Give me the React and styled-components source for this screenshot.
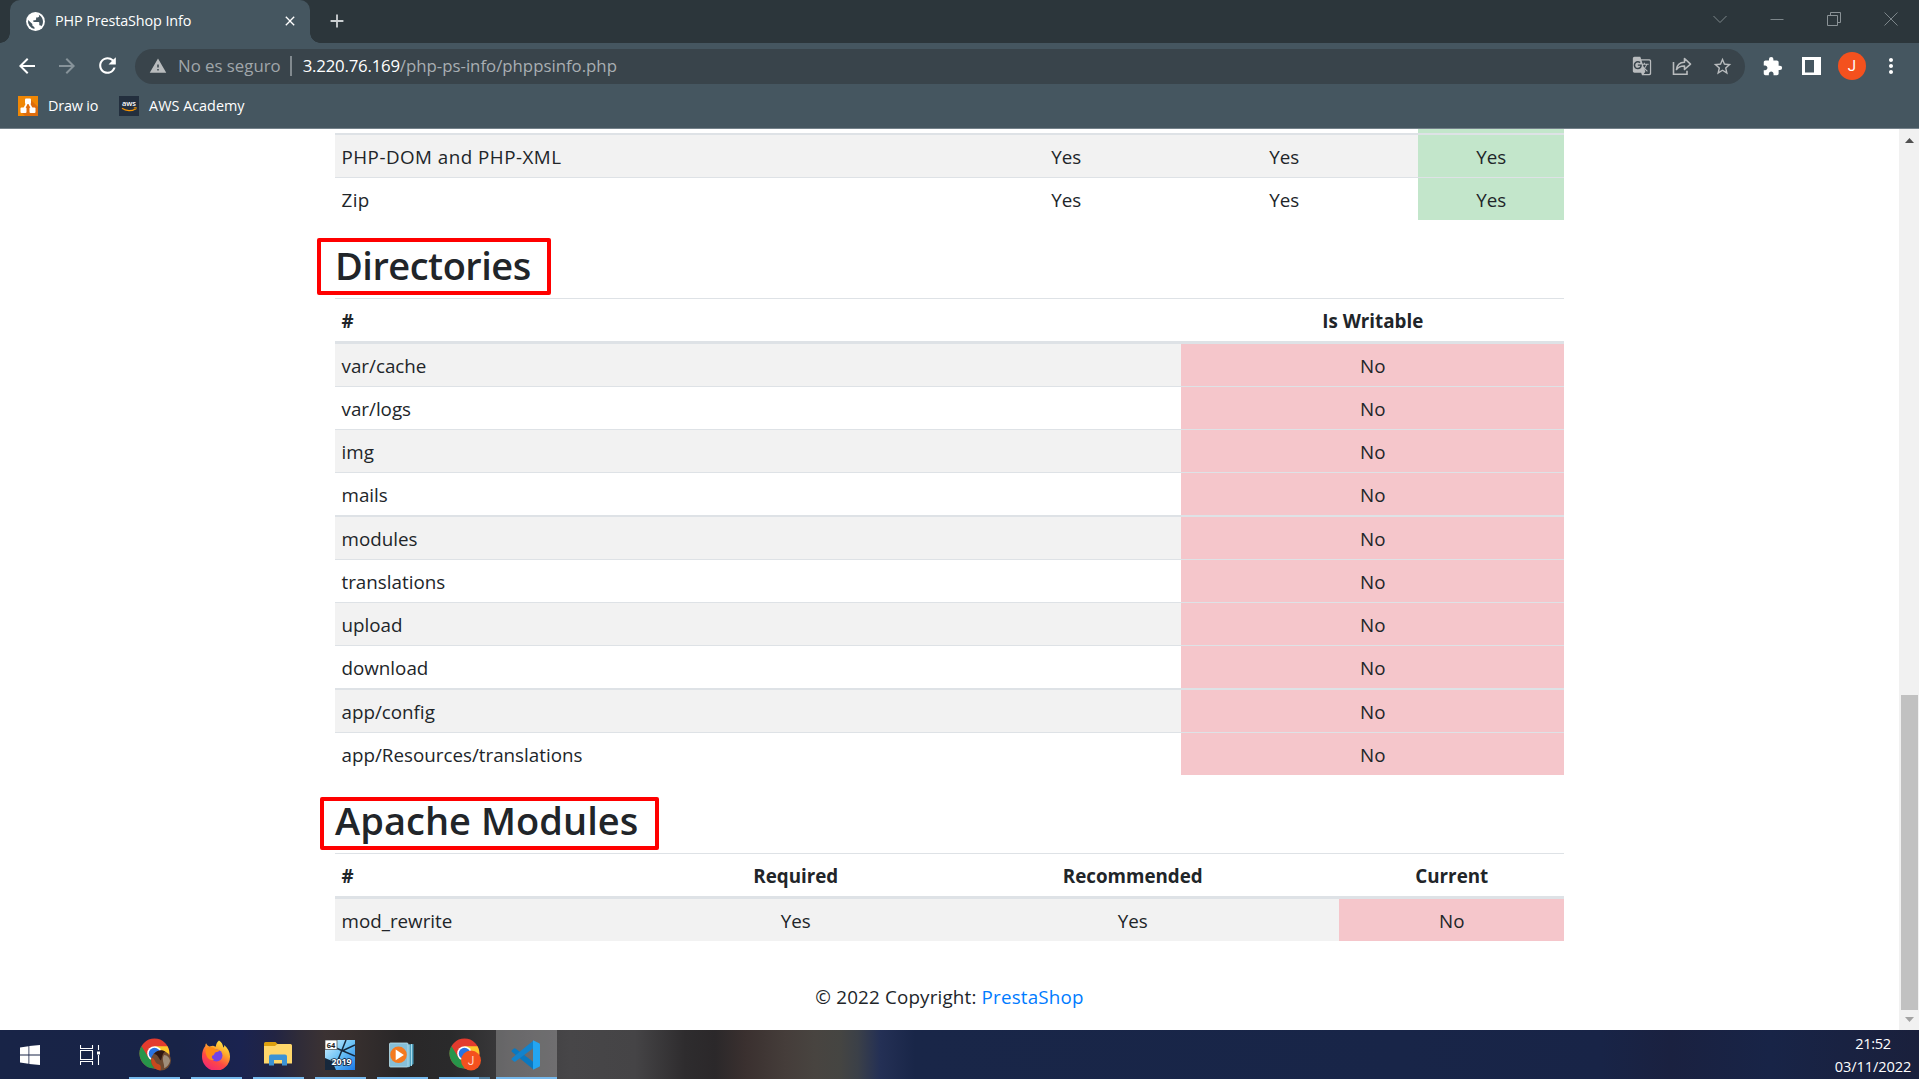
import React from "react";
import styled, { createGlobalStyle } from "styled-components";
import { MdWarning, MdGTranslate, MdStarBorder, MdExtension, MdRefresh, MdArrowBack, MdArrowForward, MdClose, MdAdd, MdMoreVert } from "react-icons/md";

const Global = createGlobalStyle`
  * { box-sizing: border-box; }
  body { margin: 0; background: #fff; overflow: hidden; }
  svg { display: block; flex: none; }
`;

const Screen = styled.div`
  width: 1919px;
  height: 1079px;
  display: flex;
  flex-direction: column;
  overflow: hidden;
  font-family: "Open Sans", "Noto Sans", sans-serif;
  color: #212529;
`;

/* ---------- browser frame ---------- */
const TabStrip = styled.div`
  height: 43px;
  flex: none;
  display: flex;
  background: #2c363b;
  padding-left: 10px;
`;
const Tab = styled.div`
  position: relative;
  width: 300px;
  height: 43px;
  background: #455660;
  border-radius: 10px 10px 0 0;
  display: flex;
  align-items: center;
  padding: 0 12px 1px 16px;
  color: #fff;
  &::before, &::after {
    content: "";
    position: absolute;
    bottom: 0;
    width: 10px;
    height: 10px;
  }
  &::before { left: -10px; background: radial-gradient(circle at 0 0, transparent 9.5px, #455660 10px); }
  &::after { right: -10px; background: radial-gradient(circle at 100% 0, transparent 9.5px, #455660 10px); }
`;
const Label = styled.span`
  font-size: ${(p) => p.$size || 14.4}px;
  letter-spacing: ${(p) => p.$track || 0}px;
  color: ${(p) => p.$color || "#fff"};
  line-height: 1.3;
  white-space: pre;
`;
const TabTitle = styled(Label)`
  flex: 1;
  margin-left: 10px;
`;
const NewTab = styled.div`
  display: flex;
  align-items: center;
  padding: 0 0 1px 16px;
  flex: 1;
`;
const WindowButtons = styled.div`
  display: flex;
  align-items: center;
  gap: 43px;
  padding: 0 21px 6px 0;
`;
const Toolbar = styled.div`
  height: 46px;
  flex: none;
  background: #455660;
  display: flex;
  align-items: center;
  padding: 0 14px 0 15px;
`;
const NavButtons = styled.div`
  display: flex;
  align-items: center;
  gap: 16px;
  width: 120px;
  padding-bottom: 1px;
`;
const Omnibox = styled.div`
  width: 1610px;
  height: 35px;
  border-radius: 18px;
  background: #39444b;
  display: flex;
  align-items: center;
  padding: 0 12px 0 14px;
`;
const Divider = styled.div`
  width: 2px;
  height: 20px;
  margin: 0 11px 0 9px;
  background: #828a8f;
`;
const Address = styled.div`
  flex: 1;
  display: flex;
  align-items: center;
  gap: 0;
`;
const Security = styled(Label)`
  margin-left: 11px;
`;
const OmniActions = styled.div`
  display: flex;
  align-items: center;
  gap: 20px;
`;
const Extensions = styled.div`
  flex: 1;
  display: flex;
  align-items: center;
  gap: 19px;
  margin-left: 17px;
`;
const Avatar = styled.div`
  width: 28px;
  height: 28px;
  margin: 0 3px 0 -2px;
  border-radius: 50%;
  background: #f4511e;
  color: #fff;
  font: 15px/28px Roboto, sans-serif;
  text-align: center;
`;
const MoreButton = styled.div`
  margin-left: -9px;
`;
const Bookmarks = styled.div`
  height: 40px;
  flex: none;
  background: #455660;
  border-bottom: 1px solid #74818a;
  display: flex;
  align-items: center;
  padding: 0 0 5px 18px;
  gap: 21px;
`;
const Bookmark = styled.div`
  display: flex;
  align-items: center;
  gap: 10px;
`;

/* ---------- page ---------- */
const Viewport = styled.div`
  height: 901px;
  flex: none;
  display: flex;
  background: #fff;
`;
const Page = styled.main`
  width: 1899px;
  padding-left: 335px;
  height: 901px;
  overflow: hidden;
`;
const Column = styled.div`
  width: 1229px;
`;
const Row = styled.div`
  display: grid;
  grid-template-columns: ${(p) => p.$cols};
  border-top: ${(p) => p.$line || 0}px solid #dee2e6;
  background: ${(p) => (p.$striped ? "#f2f2f2" : "#fff")};
`;
const HeadRow = styled(Row)`
  background: #fff;
  border-bottom: 3px solid #dee2e6;
  font-weight: 700;
`;
const tones = { ok: "#c3e6cb", bad: "#f5c6cb" };
const Cell = styled.div`
  height: ${(p) => p.$height || 42}px;
  padding: 0 6px 0 6.5px;
  line-height: 45px;
  font-size: 18.8px;
  letter-spacing: ${(p) => p.$track || 0}px;
  text-align: ${(p) => (p.$first ? "left" : "center")};
  background: ${(p) => tones[p.$tone] || "transparent"};
  white-space: nowrap;
`;
const Heading = styled.h1`
  position: relative;
  margin: 0;
  height: 78px;
  padding-top: 20px;
  font-size: 38px;
  line-height: 50px;
  font-weight: 600;
  letter-spacing: ${(p) => p.$track}px;
  white-space: nowrap;
`;
const Highlight = styled.span`
  position: absolute;
  left: ${(p) => p.$x}px;
  top: ${(p) => p.$y}px;
  width: ${(p) => p.$w}px;
  height: ${(p) => p.$h}px;
  border: 4px solid #ff0000;
  border-radius: 2px;
`;
const Footer = styled.footer`
  padding-top: 41px;
  text-align: center;
  font-size: 18.8px;
  line-height: 30px;
  letter-spacing: ${(p) => p.$track}px;
  a { color: #007bff; text-decoration: none; }
`;
const Scrollbar = styled.div`
  width: 20px;
  height: 901px;
  background: #f1f1f1;
  display: flex;
  flex-direction: column;
  align-items: center;
  padding: 9px 0 8px 1px;
`;
const Thumb = styled.div`
  width: 17px;
  height: 315px;
  margin: auto 0 7px 0;
  background: #c1c1c1;
`;

/* ---------- taskbar ---------- */
const Taskbar = styled.div`
  height: 49px;
  flex: none;
  display: flex;
  align-items: stretch;
  background: linear-gradient(90deg,
    #182447 0px, #182347 180px, #1a2350 240px, #222443 275px, #302c38 300px, #3b3233 325px,
    #38302f 350px, #292728 400px, #2a2a2b 450px, #3c3b3d 510px, #474648 570px, #454446 635px, #2e2c2e 685px,
    #2b282a 715px, #3a302f 745px, #453d3a 785px, #484440 815px, #454542 840px, #3b4048 858px,
    #243055 880px, #192648 915px, #182548 1400px, #182447 1600px, #1a2140 1670px, #182447 1770px, #1a203c 1919px);
`;
const TaskSlot = styled.div`
  width: ${(p) => p.$w || 62}px;
  padding-left: ${(p) => p.$inset || 0}px;
  padding-right: ${(p) => p.$outset || 0}px;
  display: flex;
  align-items: center;
  justify-content: center;
  background: ${(p) => (p.$active ? "rgba(255,255,255,.23)" : "transparent")};
`;
const TaskButton = styled(TaskSlot)`
  position: relative;
  &::after {
    content: "";
    position: absolute;
    left: ${(p) => (p.$active ? 0 : 5.5)}px;
    right: ${(p) => (p.$active ? 0 : 5.5)}px;
    bottom: 0;
    height: 2px;
    background: ${(p) => (p.$stacked ? "linear-gradient(90deg,#76b9ed 78%,#52809f 78%)" : "#76b9ed")};
  }
`;
const Clock = styled.div`
  width: 92px;
  margin-left: auto;
  padding-top: 4px;
  display: flex;
  flex-direction: column;
  align-items: center;
  gap: 4px;
`;

const Globe = () => (
  <svg width="19" height="19" viewBox="0 0 18 18">
    <circle cx="9" cy="9" r="8.900" fill="#fff" />
    <path d="M2 7.500 6 11.300V12.800l2 1.600V16A7.200 7.200 0 0 1 2 7.500Z" fill="#455660" />
    <path d="M11.500 2.400A7.200 7.200 0 0 1 14.500 13.600c-.3-.8-1-1.100-1.900-1.100v-2.200c0-.5-.3-.8-.8-.8H7V7.700h1.800c.5 0 .8-.3.800-.8V5.200h1.400c.8 0 1.500-.6 1.500-1.400 0-.7-.4-1.200-1-1.400Z" fill="#455660" />
  </svg>
);
const ShareIcon = () => (
  <svg width="20" height="20" viewBox="0 0 20 20" fill="none" stroke="#b9bcbe" strokeWidth="1.6">
    <path d="M1.500 6v12.200h13.500v-3.500" />
    <path d="M4.500 13.500c.4-4.500 3.200-7 8-7.200V2.500l6 5.600-6 5.400V10c-3.600-.2-6 .9-8 3.500Z" strokeLinejoin="round" />
  </svg>
);
const DrawIo = () => (
  <svg width="20" height="20" viewBox="0 0 20 20">
    <rect width="20" height="20" fill="#f08705" />
    <path d="M12 3 20 11v9H7l-4-4Z" fill="#df6c0c" />
    <path d="M10 5 5.500 14M10 5l4.500 9" stroke="#fff" strokeWidth="1.700" />
    <rect x="7" y="2.500" width="6" height="5.500" rx="1" fill="#fff" />
    <rect x="2.500" y="11.500" width="6" height="5.500" rx="1" fill="#fff" />
    <rect x="11.500" y="11.500" width="6" height="5.500" rx="1" fill="#fff" />
  </svg>
);
const Aws = () => (
  <svg width="20" height="20" viewBox="0 0 20 20">
    <rect width="20" height="20" fill="#232f3e" />
    <text x="3" y="10" fontFamily="Open Sans, sans-serif" fontWeight="600" fontSize="7.500" textLength="14" fill="#fff">aws</text>
    <path d="M3 12.300c4 3 10 3 13.200.6" fill="none" stroke="#f79400" strokeWidth="1.200" />
    <path d="M14.800 11.800l2.500-.2-.7 2.300" fill="none" stroke="#f79400" strokeWidth=".9" />
  </svg>
);
const Chrome = ({ children }) => (
  <svg width="34" height="34" viewBox="0 0 34 34">
    <circle cx="15.500" cy="15.500" r="15" fill="#e33b2e" />
    <path d="M15.500 8.200h13a15 15 0 0 1-13 22.300l6.300-11Z" fill="#fdc92b" />
    <path d="M2.500 8A15 15 0 0 0 15.500 30.500l6.300-11.200-6.300 3.500-6.300-3.600Z" fill="#27954a" />
    <circle cx="15.500" cy="15.500" r="7.300" fill="#fff" />
    <circle cx="15.500" cy="15.500" r="5.700" fill="#2a74e2" />
    {children}
  </svg>
);
const Firefox = () => (
  <svg width="30" height="30" viewBox="0 0 30 30">
    <defs>
      <linearGradient id="fx" x1=".8" y1="0" x2=".25" y2="1">
        <stop offset="0" stopColor="#fff04a" /><stop offset=".35" stopColor="#ffa52b" /><stop offset=".65" stopColor="#ff4a43" /><stop offset="1" stopColor="#ef2577" />
      </linearGradient>
    </defs>
    <path d="M18 .5c3 2 4 4.500 4.300 7 1-.4 1-1.500.9-2.500 3.800 3.200 6 7.500 5.800 12A14 14 0 0 1 1 16.500C1 12 2.200 8.500 4.300 6c0-1 .2-2 .8-2.800.7 1.500 1.700 2.500 3 3.200L12 5.700c1 .2 2 .6 2.800 1.100C15 4.500 16 2 18 .5Z" fill="url(#fx)" />
    <circle cx="15.500" cy="15.500" r="6" fill="#7543e5" />
    <path d="M4.600 8.500c3-2 7-2 10 1l4 .6c-.4 1.700-2.500 2-4.300 2.400-1.300 1.300-.8 3-3.200 3.300-.9 1.700.6 3.600 2.300 4.200C8 21 4 17 4.600 8.500Z" fill="#ff8a16" />
  </svg>
);
const Folder = () => (
  <svg width="28" height="26" viewBox="0 0 28 26">
    <path d="M0 1.500Q0 0 1.500 0h10l2 2-2 3H0Z" fill="#dda00e" />
    <path d="M0 4h11l2.200-2H26.500Q28 2 28 3.500V21.500H0Z" fill="#ffd76b" />
    <path d="M5 23.500v-9q0-2 2-2h14q2 0 2 2v9h-5v-5.500h-8v5.500Z" fill="#3c93d5" />
  </svg>
);
const Calc2019 = () => (
  <svg width="30" height="30" viewBox="0 0 30 30">
    <defs><linearGradient id="cb" x1="0" y1="0" x2="1" y2="1"><stop offset="0" stopColor="#d8f2ff" /><stop offset=".5" stopColor="#6dc3f5" /><stop offset="1" stopColor="#1b78e6" /></linearGradient></defs>
    <rect width="30" height="30" fill="url(#cb)" />
    <path d="M21 0 13 20M11 8l19 8M17 11l13-6" stroke="#16283c" strokeWidth="1.500" fill="none" />
    <path d="M0 18 7 21l4 9H0Z" fill="#16283c" />
    <rect width="12" height="9.500" fill="#fff" stroke="#555" strokeWidth=".8" />
    <text x="6" y="7.600" textAnchor="middle" fontFamily="Open Sans, sans-serif" fontWeight="700" fontSize="7.500" fill="#222">64</text>
    <text x="16.500" y="25.300" textAnchor="middle" fontFamily="Open Sans, sans-serif" fontWeight="700" fontSize="8.800" fill="#fff" stroke="#10243c" strokeWidth="1.600" paintOrder="stroke">2019</text>
  </svg>
);
const Player = () => (
  <svg width="25" height="26" viewBox="0 0 25 26">
    <path d="M7 3.500 24.500 2v20L19 25.500Z" fill="#4e9fbd" />
    <path d="M20 2.500V25M22.500 2v22" stroke="#a8dcec" strokeWidth="1" />
    <rect x=".5" y="1" width="18.500" height="24" rx="1" fill="#86bfd8" stroke="#b9dfec" strokeWidth=".8" />
    <circle cx="9.500" cy="12.800" r="8.300" fill="#f47a20" />
    <path d="M6.700 7.500v10.800l8.200-5.400Z" fill="#fff" />
  </svg>
);
const Code = () => (
  <svg width="30" height="30" viewBox="0 0 30 30">
    <path d="M.8 10.200 3 8.500q.7-.4 1.400 0L22.500 22v7.500L.8 11.700q-.6-.7 0-1.500Z" fill="#0a78c0" />
    <path d="M.8 19.800 3 21.500q.7.400 1.400 0L22.500 8V.5L.8 18.300q-.6.700 0 1.500Z" fill="#1383cc" />
    <path d="M22 .2 28.200 3.200q.8.400.8 1.300v21q0 .9-.8 1.300L22 29.800Z" fill="#23a5f2" />
  </svg>
);

const dirs = ["var/cache", "var/logs", "img", "mails", "modules", "translations", "upload", "download", "app/config", "app/Resources/translations"];
const extCols = "647px 168px 268px 146px";
const dirCols = "846px 383px";
const modCols = "330px 261px 413px 225px";

export default function App() {
  return (
    <Screen>
      <Global />
      <TabStrip>
        <Tab>
          <Globe />
          <TabTitle $track={-0.12}>PHP PrestaShop Info</TabTitle>
          <MdClose size={16} />
        </Tab>
        <NewTab><MdAdd size={22} color="#ccd0d2" /></NewTab>
        <WindowButtons>
          <svg width="14" height="14" viewBox="0 0 14 14" fill="none" stroke="#7d868a"><path d="M.5 4 7 10.500 13.500 4" /></svg>
          <svg width="14" height="14" viewBox="0 0 14 14" stroke="#7d868a"><path d="M.5 7.500h13" /></svg>
          <svg width="14" height="14" viewBox="0 0 14 14" fill="none" stroke="#8a9296"><path d="M.5 3.500h10v10H.5ZM3.500 3V.5h10v10H11" /></svg>
          <svg width="14" height="14" viewBox="0 0 14 14" stroke="#7d868a"><path d="M.5.500l13 13M13.500.500l-13 13" /></svg>
        </WindowButtons>
      </TabStrip>
      <Toolbar>
        <NavButtons>
          <MdArrowBack size={24} color="#fff" />
          <MdArrowForward size={24} color="#87939a" />
          <MdRefresh size={25} color="#fff" />
        </NavButtons>
        <Omnibox>
          <Address>
            <MdWarning size={18} color="#b9bcbe" />
            <Security $size={16.8} $color="#a0a6aa">No es seguro</Security>
            <Divider />
            <Label $size={16.8} $track={-0.2}>3.220.76.169</Label>
            <Label $size={16.8} $color="#a9afb3">/php-ps-info/phppsinfo.php</Label>
          </Address>
          <OmniActions>
            <MdGTranslate size={20} color="#b9bcbe" />
            <ShareIcon />
            <MdStarBorder size={21} color="#b9bcbe" />
          </OmniActions>
        </Omnibox>
        <Extensions>
          <MdExtension size={21} color="#fff" />
          <svg width="19" height="18" viewBox="0 0 19 18"><path fillRule="evenodd" d="M0 0h19v18H0ZM3 3v12.500h9V3Z" fill="#fff" /></svg>
          <Avatar>J</Avatar>
          <MoreButton><MdMoreVert size={24} color="#fff" /></MoreButton>
        </Extensions>
      </Toolbar>
      <Bookmarks>
        <Bookmark><DrawIo /><Label $track={-0.2}>Draw io</Label></Bookmark>
        <Bookmark><Aws /><Label $track={0}>AWS Academy</Label></Bookmark>
      </Bookmarks>

      <Viewport>
        <Page>
          <Column>
            <Row $cols={extCols}>
              <Cell $height={4} /><Cell $height={4} /><Cell $height={4} /><Cell $height={4} $tone="ok" />
            </Row>
            <Row $cols={extCols} $line={2} $striped>
              <Cell $first $track={0.48}>PHP-DOM and PHP-XML</Cell><Cell>Yes</Cell><Cell>Yes</Cell><Cell $tone="ok">Yes</Cell>
            </Row>
            <Row $cols={extCols} $line={1}>
              <Cell $first $track={0.4}>Zip</Cell><Cell>Yes</Cell><Cell>Yes</Cell><Cell $tone="ok">Yes</Cell>
            </Row>

            <Heading $track={-0.5}>
              Directories
              <Highlight $x={-18} $y={18} $w={234} $h={57} />
            </Heading>
            <HeadRow $cols={dirCols} $line={1}>
              <Cell $first>#</Cell><Cell>Is Writable</Cell>
            </HeadRow>
            {dirs.map((name, i) => (
              <Row key={name} $cols={dirCols} $line={i === 0 ? 0 : i % 4 === 0 ? 2 : 1} $striped={i % 2 === 0}>
                <Cell $first>{name}</Cell><Cell $tone="bad">No</Cell>
              </Row>
            ))}

            <Heading $track={0.05}>
              Apache Modules
              <Highlight $x={-15} $y={22} $w={339} $h={53} />
            </Heading>
            <HeadRow $cols={modCols} $line={1}>
              <Cell $first>#</Cell><Cell>Required</Cell><Cell>Recommended</Cell><Cell>Current</Cell>
            </HeadRow>
            <Row $cols={modCols} $striped>
              <Cell $first>mod_rewrite</Cell><Cell>Yes</Cell><Cell>Yes</Cell><Cell $tone="bad">No</Cell>
            </Row>
          </Column>
          <Column>
            <Footer $track={0.18}>© 2022 Copyright: <a>PrestaShop</a></Footer>
          </Column>
        </Page>
        <Scrollbar>
          <svg width="9" height="6" viewBox="0 0 9 6"><path d="M4.500 0 9 5H0Z" fill="#505050" /></svg>
          <Thumb />
          <svg width="9" height="5" viewBox="0 0 9 5"><path d="M4.500 5 0 0h9Z" fill="#a3a3a3" /></svg>
        </Scrollbar>
      </Viewport>

      <Taskbar>
        <TaskSlot $w={60}>
          <svg width="20" height="20" viewBox="0 0 20 20" fill="#fff"><path d="M0 2.500 8.500 1.200v8.300H0ZM9.300 1.100 20 0v9.500H9.300ZM0 10.400h8.500v8.400L0 17.500ZM9.300 10.400H20V20L9.300 18.900Z" /></svg>
        </TaskSlot>
        <TaskSlot $w={63.500} $outset={3.500}>
          <svg width="20" height="20" viewBox="0 0 20 20" fill="none" stroke="#fff" strokeWidth="1.100"><path d="M.5 0v3.500h12V0M.5 20v-3.500h12V20M.5 5.500h12v9H.5ZM18.500 0v5M18.500 10v10" /><path d="M17 6.500h3v3h-3Z" fill="#fff" stroke="none" /></svg>
        </TaskSlot>
        <TaskButton $inset={3}>
          <Chrome>
            <circle cx="22" cy="22.500" r="10" fill="#6e4a32" />
            <path d="M12.500 20c4 0 3 5 6.500 6s3 4 2.500 6.400A10 10 0 0 1 12.500 20Z" fill="#c8481d" />
            <path d="M15 16c3-4 8-4.500 11-2.500-3 2-3 7-4 9-3-3-3-6-7-6.500Z" fill="#2f1712" />
            <path d="M25 17c3 0 6 3 6 6-1 4-4 7-6 7 1-4-3-8 0-13Z" fill="#a08e7c" />
          </Chrome>
        </TaskButton>
        <TaskButton $outset={1}><Firefox /></TaskButton>
        <TaskButton $outset={1}><Folder /></TaskButton>
        <TaskButton $outset={1}><Calc2019 /></TaskButton>
        <TaskButton $outset={2}><Player /></TaskButton>
        <TaskButton $stacked $inset={2}>
          <Chrome>
            <circle cx="22" cy="22.500" r="10" fill="#f4511e" />
            <text x="22" y="27" textAnchor="middle" fontFamily="Roboto, sans-serif" fontSize="12" fill="#ffd5c7">J</text>
          </Chrome>
        </TaskButton>
        <TaskButton $active $w={61}><Code /></TaskButton>
        <Clock>
          <Label $size={14.6} $track={-0.35}>21:52</Label>
          <Label $size={14.6} $track={-0.1}>03/11/2022</Label>
        </Clock>
      </Taskbar>
    </Screen>
  );
}
